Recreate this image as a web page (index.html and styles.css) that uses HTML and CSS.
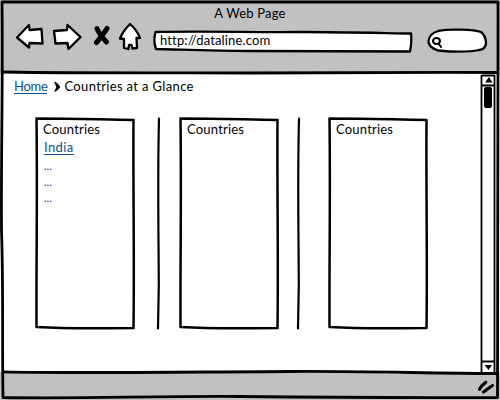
FILE: index.html
```html
<!DOCTYPE html>
<html lang="en">
<head>
<meta charset="utf-8">
<title>A Web Page</title>
<link rel="stylesheet" href="styles.css">
</head>
<body>
<div class="window">
  <header class="chrome">
    <h1 class="title">A Web Page</h1>
    <div class="toolbar">
      <svg class="icon back" width="30" height="28" viewBox="15 23 30 28"><path class="shape" d="M17 37.500 L29 25 L29.500 30 L41.500 29 L42.500 43.500 L29.500 43 L29 47.500 Z"/></svg>
      <svg class="icon forward" width="30" height="28" viewBox="52 23 30 28"><path class="shape" d="M54 31 L67 30 L67.500 25 L80.500 37 L68.500 49 L67.500 43 L55.500 43.500 Z"/></svg>
      <svg class="icon stop" width="18" height="28" viewBox="93 23 18 28"><path class="cross" d="M97 28.500 Q99 34 106.500 42 M107 28.500 Q103 35 96.500 42.500"/></svg>
      <svg class="icon home" width="24" height="30" viewBox="118 22 24 30"><path class="shape" d="M130 24 Q137 30 140 38 L136.500 38 L137 48 L132.500 48.500 L131.500 45 L129 45 L128.500 49 L124 48 L124 39 L120 38.500 Q123 31 130 24 Z"/></svg>
      <div class="address">
        <svg class="sketch" width="262" height="26" viewBox="152 28 262 26"><path class="shape" d="M155.500 32 C210 31 250 32.500 300 32 C340 32 380 33 411 33.500 Q412 42 410 51.500 C350 51.500 300 51.500 250 51 C210 50.500 180 49.500 156 49 Q153 41 155.500 32 Z"/></svg>
        <span class="url">http://dataline.com</span>
      </div>
      <svg class="icon search" width="62" height="28" viewBox="426 27 62 28"><path class="shape" d="M438 31 C450 28.500 474 29.500 481 32 Q486 36 486 43 Q486 49 479 50 C465 53 448 51.500 438 50.500 Q428 47 428.500 41 Q429 34 438 31 Z"/><ellipse class="lens" cx="436.500" cy="41" rx="3.500" ry="3"/><path class="lens" d="M438.500 43.500 L441 47"/></svg>
    </div>
  </header>
  <div class="body">
    <main class="page">
      <nav class="crumbs">
        <a class="link home-link">Home</a>
        <svg class="chevron" width="8" height="12" viewBox="0 0 8 12"><path d="M1 .8 Q5 1.500 7.200 6 Q5 10 1 11 L3.400 6 Z"/></svg>
        <span class="current">Countries at a Glance</span>
      </nav>
      <div class="columns">
        <section class="card">
          <svg class="sketch" width="104" height="216" viewBox="0 0 104 216"><path class="panel" d="M2.500 3.500 C40 3.500 65 4.500 99.500 5 C99 70 100.500 150 99.500 213 C70 213 45 214.500 2.500 212 C2.200 150 3.500 80 2.500 3.500 Z"/></svg>
          <h2 class="card-title">Countries</h2>
          <a class="link india">India</a>
          <p class="more">...</p><p class="more">...</p><p class="more">...</p>
        </section>
        <svg class="rule first" width="6" height="216" viewBox="0 0 6 216"><path d="M4 3.500 C2.500 60 3.500 110 3.800 170 L3 213.500"/></svg>
        <section class="card">
          <svg class="sketch" width="104" height="216" viewBox="0 0 104 216"><path class="panel" d="M2.500 3.500 C40 3.500 65 4.500 99.500 5 C99 70 100.500 150 99.500 213 C70 213 45 214.500 2.500 212 C2.200 150 3.500 80 2.500 3.500 Z"/></svg>
          <h2 class="card-title">Countries</h2>
        </section>
        <svg class="rule second" width="6" height="216" viewBox="0 0 6 216"><path d="M4 3.500 C2.500 60 3.500 110 3.800 170 L3 213.500"/></svg>
        <section class="card">
          <svg class="sketch" width="104" height="216" viewBox="0 0 104 216"><path class="panel" d="M2.500 3.500 C40 3.500 65 4.500 99.500 5 C99 70 100.500 150 99.500 213 C70 213 45 214.500 2.500 212 C2.200 150 3.500 80 2.500 3.500 Z"/></svg>
          <h2 class="card-title">Countries</h2>
        </section>
      </div>
    </main>
    <div class="scrollbar">
      <svg width="20" height="299" viewBox="480 73 20 299">
        <path class="track" d="M481.500 75.500 H494.500 V372 M481.500 75 V372 M481.500 85.500 H495 M481.500 361.500 H495"/>
        <path class="arrow" d="M489 77 L492.500 82.500 H485 Z M484.500 365 H492 L488.500 370 Z"/>
        <rect class="thumb" x="484" y="87" width="8" height="21" rx="2"/>
      </svg>
    </div>
  </div>
  <footer class="status">
    <svg class="grip" width="18" height="16" viewBox="477 379 18 16"><path d="M479.500 389.300 Q481.500 385.500 485.800 382.300 M483.500 392 Q487.500 389 492.500 385.500"/></svg>
  </footer>
  <svg class="frame" width="500" height="400" viewBox="0 0 500 400">
    <path d="M2 2 C120 2.500 300 1.500 498 2 C498.500 150 496.500 300 497.500 397.500 C380 398 330 397.500 240 396.500 C150 396 80 399 3 397.500 C2 340 3.500 290 1.500 230 C1 150 3 80 2 2 Z"/>
    <path d="M3 72 C100 73.500 180 72.500 250 73 C350 73.500 420 72 498 72.500"/>
    <path d="M3 371.800 C80 373.500 180 372 290 371.500 C370 371 430 373.500 497 373.500"/>
  </svg>
</div>
</body>
</html>
```
FILE: styles.css
```css
* { box-sizing: border-box; }
body { margin: 0; background: #fff; }
.window {
  position: relative;
  display: flex;
  flex-direction: column;
  width: 500px;
  height: 400px;
  overflow: hidden;
  font: 13px/16px Lato, "Open Sans", sans-serif;
  color: #000;
  background: #fff;
}
.frame { position: absolute; inset: 0; pointer-events: none; }
.frame path { fill: none; stroke: #000; stroke-width: 2.800; stroke-linejoin: round; }
.chrome { height: 73px; padding-top: 5px; background: #c1c1c1; }
.title { margin: 0; font-size: 13px; font-weight: 400; line-height: 17px; text-align: center; letter-spacing: .2px; }
.toolbar { display: flex; align-items: flex-start; padding-left: 15px; }
.icon { display: block; flex: none; margin-top: 1px; }
.forward { margin-left: 7px; }
.stop { margin-left: 11px; }
.home { margin: 0 0 0 7px; }
.shape { fill: #fff; stroke: #000; stroke-width: 2.300; stroke-linejoin: round; }
.cross { fill: none; stroke: #000; stroke-width: 5; stroke-linecap: round; }
.lens { fill: none; stroke: #000; stroke-width: 2.100; stroke-linecap: round; }
.address { position: relative; width: 262px; height: 26px; margin: 6px 0 0 10px; padding: 4px 0 0 8px; }
.sketch { position: absolute; left: 0; top: 0; }
.url { position: relative; letter-spacing: .14px; }
.search { margin: 5px 0 0 12px; }
.body { display: flex; height: 299px; }
.page { width: 480px; }
.crumbs { display: flex; align-items: center; height: 16px; margin: 5px 0 0 14px; }
.link { color: #0b4f91; border-bottom: 1px solid #0b4f91; line-height: 14px; }
.home-link { letter-spacing: -.3px; }
.chevron { margin: 1px 3px 0 6px; }
.current { letter-spacing: .35px; }
.columns { display: flex; margin: 21px 0 0 34px; }
.card { position: relative; display: flex; flex-direction: column; align-items: flex-start; width: 104px; height: 216px; padding: 6px 0 0 9px; }
.card-title { position: relative; margin: 0; font-size: 13px; line-height: 16px; font-weight: 400; letter-spacing: .2px; }
.india { position: relative; margin: 3px 0 3px 1px; letter-spacing: .4px; }
.more { position: relative; margin: 0 0 0 1px; font-size: 11px; line-height: 16px; color: #333b48; }
.panel { fill: #fff; stroke: #000; stroke-width: 2.500; stroke-linejoin: round; }
.rule { flex: none; }
.first { margin: 0 17px; }
.second { margin: 0 26px 0 13px; }
.rule path { fill: none; stroke: #000; stroke-width: 2.200; stroke-linecap: round; }
.track { fill: none; stroke: #000; stroke-width: 1.800; }
.status { display: flex; justify-content: flex-end; height: 28px; padding: 7px 5px 0 0; background: #c1c1c1; }
.grip path { fill: none; stroke: #000; stroke-width: 3.100; stroke-linecap: round; }
```
